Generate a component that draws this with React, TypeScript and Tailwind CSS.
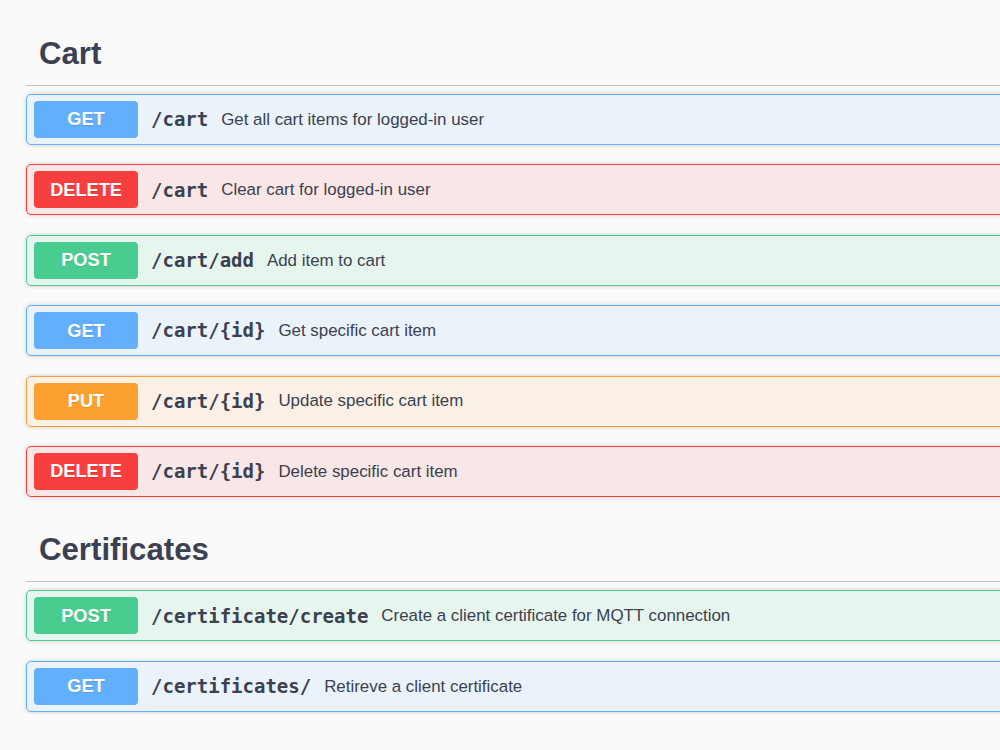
import React from "react";

type Method = "GET" | "POST" | "PUT" | "DELETE";

const styles: Record<Method, { block: string; badge: string }> = {
  GET: {
    block: "bg-[rgba(97,175,254,0.1)] border-[#61affe]",
    badge: "bg-[#61affe]",
  },
  POST: {
    block: "bg-[rgba(73,204,144,0.1)] border-[#49cc90]",
    badge: "bg-[#49cc90]",
  },
  PUT: {
    block: "bg-[rgba(252,161,48,0.1)] border-[#fca130]",
    badge: "bg-[#fca130]",
  },
  DELETE: {
    block: "bg-[rgba(249,62,62,0.1)] border-[#f93e3e]",
    badge: "bg-[#f93e3e]",
  },
};

function Op({ method, path, desc }: { method: Method; path: string; desc: string }) {
  const s = styles[method];
  return (
    <div
      className={`flex items-center h-[51px] mb-[19.4px] border rounded-[5px] shadow-[0_0_4px_rgba(0,0,0,0.19)] px-[7px] ${s.block}`}
    >
      <span
        className={`w-[104px] h-[37px] flex items-center justify-center pt-[1px] rounded-[4px] text-white font-bold text-[18.2px] [text-shadow:0_1px_0_rgba(0,0,0,0.1)] ${s.badge}`}
        style={{ fontFamily: '"Liberation Sans", Arial, sans-serif' }}
      >
        {method}
      </span>
      <span
        className="pl-[13px] pr-[13px] text-[#3b4151] font-bold text-[19px]"
        style={{ fontFamily: '"DejaVu Sans Mono", "Liberation Mono", monospace' }}
      >
        {path}
      </span>
      <span
        className="text-[#3b4151] text-[16.9px]"
        style={{ fontFamily: '"Liberation Sans", Arial, sans-serif' }}
      >
        {desc}
      </span>
    </div>
  );
}

function Tag({ title }: { title: string }) {
  return (
    <div className="h-[66px] pt-[16px] pl-[13px] border-b-[1.3px] border-[rgba(59,65,81,0.3)] mb-[8px]">
      <h3
        className="text-[31.2px] font-bold text-[#3b4151] leading-[36px]"
        style={{ fontFamily: '"Liberation Sans", Arial, sans-serif' }}
      >
        {title}
      </h3>
    </div>
  );
}

export default function App() {
  return (
    <div className="w-[1000px] h-[750px] overflow-hidden bg-[#fafafa]">
      <div className="w-[1400px] pl-[26px] pt-[20px]">
        <Tag title="Cart" />
        <Op method="GET" path="/cart" desc="Get all cart items for logged-in user" />
        <Op method="DELETE" path="/cart" desc="Clear cart for logged-in user" />
        <Op method="POST" path="/cart/add" desc="Add item to cart" />
        <Op method="GET" path="/cart/{id}" desc="Get specific cart item" />
        <Op method="PUT" path="/cart/{id}" desc="Update specific cart item" />
        <Op method="DELETE" path="/cart/{id}" desc="Delete specific cart item" />
        <Tag title="Certificates" />
        <Op method="POST" path="/certificate/create" desc="Create a client certificate for MQTT connection" />
        <Op method="GET" path="/certificates/" desc="Retireve a client certificate" />
      </div>
    </div>
  );
}
